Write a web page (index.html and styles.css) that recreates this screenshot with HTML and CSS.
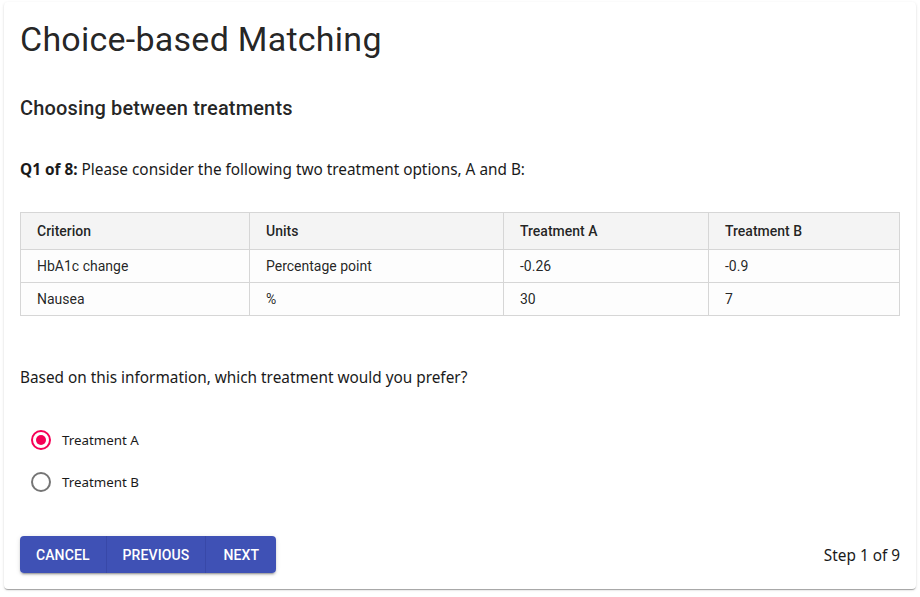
FILE: index.html
```html
<!DOCTYPE html>
<html>
<head>
<meta charset="utf-8">
<link rel="stylesheet" href="styles.css">
</head>
<body>
<div class="page">
  <div class="card">
    <h1 class="title">Choice-based Matching</h1>
    <h2 class="subtitle">Choosing between treatments</h2>
    <p class="question"><b>Q1 of 8:</b> Please consider the following two treatment options, A and B:</p>
    <table class="grid">
      <colgroup>
        <col class="c1"><col class="c2"><col class="c3"><col class="c4">
      </colgroup>
      <thead>
        <tr><th>Criterion</th><th>Units</th><th>Treatment A</th><th>Treatment B</th></tr>
      </thead>
      <tbody>
        <tr><td>HbA1c change</td><td>Percentage point</td><td>-0.26</td><td>-0.9</td></tr>
        <tr><td>Nausea</td><td>%</td><td>30</td><td>7</td></tr>
      </tbody>
    </table>
    <p class="prompt">Based on this information, which treatment would you prefer?</p>
    <div class="options">
      <label class="option">
        <span class="radio checked"><span class="dot"></span></span>
        <span class="opt-label">Treatment A</span>
      </label>
      <label class="option">
        <span class="radio"></span>
        <span class="opt-label">Treatment B</span>
      </label>
    </div>
    <div class="footer">
      <div class="btn-group">
        <button class="btn">Cancel</button>
        <button class="btn">Previous</button>
        <button class="btn">Next</button>
      </div>
      <span class="step">Step 1 of 9</span>
    </div>
  </div>
</div>
</body>
</html>
```

FILE: styles.css
```css
html, body {
  margin: 0;
  padding: 0;
  background: #fff;
}
.page {
  padding: 2px 4px 8px 4px;
}
.card {
  background: #fff;
  border-radius: 4px;
  box-shadow: 0 2px 1px -1px rgba(0,0,0,0.2), 0 1px 1px 0 rgba(0,0,0,0.14), 0 1px 3px 0 rgba(0,0,0,0.12);
  padding: 16px;
  color: rgba(0,0,0,0.87);
}
.title {
  font-family: Roboto, sans-serif;
  font-weight: 400;
  font-size: 34px;
  line-height: 42px;
  margin: 0;
  letter-spacing: 0.25px;
}
.subtitle {
  font-family: Roboto, sans-serif;
  font-weight: 500;
  font-size: 20px;
  line-height: 32px;
  margin: 32px 0 0 0;
  letter-spacing: 0.15px;
}
.question, .prompt {
  font-family: "Noto Sans", sans-serif;
  font-size: 15.35px;
  line-height: 24px;
  margin: 0;
  color: #1a1a1a;
}
.question {
  margin-top: 33px;
}
.question b {
  font-weight: 700;
}
.grid {
  margin-top: 31px;
  width: 100%;
  border-collapse: collapse;
  font-family: Roboto, sans-serif;
  font-size: 14px;
  color: rgba(0,0,0,0.87);
}
.c1 { width: 229px; }
.c2 { width: 254px; }
.c3 { width: 205px; }
.grid th, .grid td {
  border: 1px solid #d6d6d6;
  text-align: left;
  padding: 0 16px;
}
.grid th {
  background: #f4f4f4;
  font-weight: 500;
  height: 36px;
}
.grid td {
  background: #fdfdfd;
  height: 32px;
}
.prompt {
  margin-top: 49px;
}
.options {
  margin-top: 39px;
  display: flex;
  flex-direction: column;
  gap: 18px;
}
.option {
  display: flex;
  align-items: center;
  gap: 11px;
  height: 24px;
  padding-left: 11px;
}
.radio {
  box-sizing: border-box;
  width: 20px;
  height: 20px;
  border-radius: 50%;
  border: 2px solid #757575;
  display: flex;
  align-items: center;
  justify-content: center;
}
.radio.checked {
  border-color: #f50057;
}
.dot {
  width: 10px;
  height: 10px;
  border-radius: 50%;
  background: #f50057;
}
.opt-label {
  font-family: "Noto Sans", sans-serif;
  font-size: 13.35px;
  color: #1a1a1a;
}
.footer {
  margin-top: 42px;
  display: flex;
  align-items: center;
  justify-content: space-between;
}
.btn-group {
  display: flex;
  border-radius: 4px;
  box-shadow: 0 3px 1px -2px rgba(0,0,0,0.2), 0 2px 2px 0 rgba(0,0,0,0.14), 0 1px 5px 0 rgba(0,0,0,0.12);
  overflow: hidden;
}
.btn {
  font-family: Roboto, sans-serif;
  font-weight: 500;
  font-size: 14px;
  letter-spacing: 0.1px;
  text-transform: uppercase;
  color: #fff;
  background: #3f51b5;
  border: none;
  border-right: 1px solid #3848a8;
  height: 37px;
  min-width: 70px;
  padding: 0 16px;
  margin: 0;
}
.btn:last-child {
  border-right: none;
}
.step {
  font-family: "Noto Sans", sans-serif;
  font-size: 15.35px;
  color: #1a1a1a;
}
```
